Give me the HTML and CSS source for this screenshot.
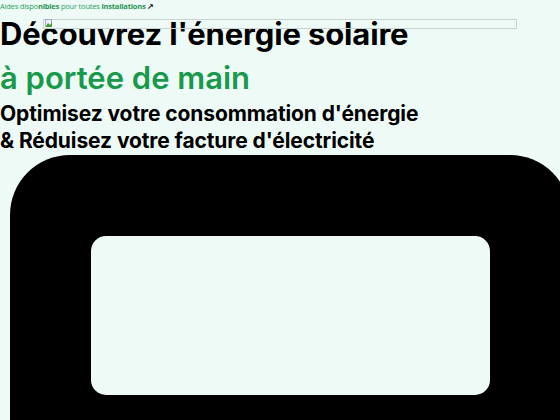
FILE: index.html
```html
<!DOCTYPE html>
<html lang="fr">
<head>
<meta charset="utf-8">
<link rel="stylesheet" href="styles.css">
</head>
<body>
<div class="page">
  <p class="aides">Aides dispo<b>nibles</b> pour toutes <b>installations</b> <span class="arrow">↗</span></p>
  <div class="broken"><svg width="8" height="9" viewBox="0 0 8 9"><rect x="0.5" y="0.5" width="6" height="7" fill="#eef" stroke="#aab"/><path d="M1 7 L3 4 L5 6 L7 3 L7 8 L1 8 Z" fill="#4a9a3a"/></svg></div>
  <h1 class="title">Découvrez l'énergie solaire</h1>
  <h2 class="subtitle">à portée de main</h2>
  <p class="lead">Optimisez votre consommation d'énergie<br>&amp; Réduisez votre facture d'électricité</p>
  <div class="device">
    <div class="screen"></div>
  </div>
</div>
</body>
</html>
```
FILE: styles.css
```css
html, body {
  margin: 0;
  padding: 0;
  background: #eefaf6;
  overflow: hidden;
}
.page {
  position: relative;
  font-family: Inter, Roboto, "Liberation Sans", sans-serif;
  width: 560px;
  height: 420px;
}
.aides {
  margin: 0;
  padding-top: 1px;
  font-family: "Open Sans", sans-serif;
  font-size: 7.5px;
  line-height: 10px;
  color: #27a55e;
  letter-spacing: -0.2px;
}
.aides b { font-weight: 700; color: #1f9652; }
.arrow { color: #222; font-weight: 700; }
.broken {
  position: absolute;
  left: 43px;
  top: 19px;
  width: 472px;
  height: 8px;
  border: 1px solid #c9d3cf;
  line-height: 0;
}
.broken svg { position: relative; left: 1px; top: -1px; }
.title {
  margin: 3px 0 0;
  font-size: 31px;
  line-height: 40px;
  font-weight: 700;
  letter-spacing: -0.15px;
  color: #000;
}
.subtitle {
  margin: 4px 0 0;
  font-size: 31px;
  line-height: 40px;
  font-weight: 600;
  color: #18994b;
}
.lead {
  margin: 2px 0 0;
  font-size: 21px;
  line-height: 27px;
  font-weight: 700;
  letter-spacing: -0.1px;
  color: #000;
}
.device {
  margin: 1px 0 0 10px;
  width: 560px;
  height: 400px;
  box-sizing: border-box;
  background: #000;
  border-radius: 60px;
  padding: 81px;
}
.screen {
  width: 399px;
  height: 159px;
  background: #eefaf6;
  border-radius: 15px;
}
```
